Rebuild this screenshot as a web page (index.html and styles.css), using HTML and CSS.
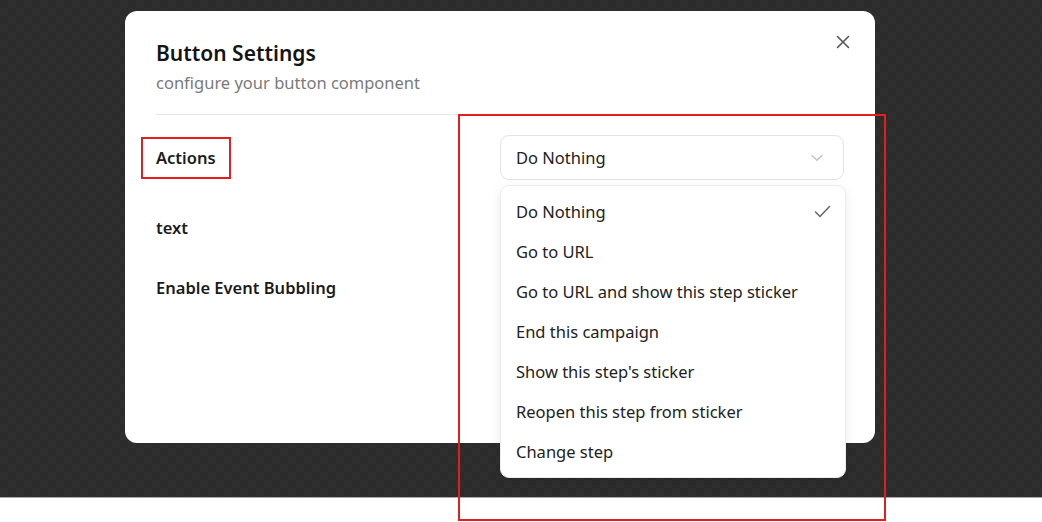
FILE: index.html
```html
<!DOCTYPE html>
<html lang="en">
<head>
<meta charset="utf-8">
<title>Button Settings</title>
<link rel="stylesheet" href="styles.css">
</head>
<body>
<div class="backdrop">
  <div class="modal">
    <div class="header">
      <div class="titles">
        <h1 class="title">Button Settings</h1>
        <p class="subtitle">configure your button component</p>
      </div>
      <button class="close" aria-label="Close">
        <svg width="14" height="14" viewBox="0 0 14 14"><path d="M1.5 1.5 L12.5 12.5 M12.5 1.5 L1.5 12.5" stroke="#555" stroke-width="1.6" fill="none" stroke-linecap="round"/></svg>
      </button>
    </div>
    <div class="divider"></div>
    <div class="form">
      <div class="row row-actions">
        <div class="label"><span class="label-marked">Actions</span></div>
        <div class="control">
          <div class="select">
            <span>Do Nothing</span>
            <svg width="12" height="8" viewBox="0 0 12 8"><path d="M1 1.5 L6 6.3 L11 1.5" stroke="#bdbdbd" stroke-width="1.3" fill="none" stroke-linecap="round" stroke-linejoin="round"/></svg>
          </div>
          <ul class="menu">
            <li class="item selected"><span>Do Nothing</span>
              <svg width="17" height="13" viewBox="0 0 17 13"><path d="M1.5 7 L6 11.5 L15.5 1.5" stroke="#666" stroke-width="1.5" fill="none" stroke-linecap="round" stroke-linejoin="round"/></svg>
            </li>
            <li class="item">Go to URL</li>
            <li class="item">Go to URL and show this step sticker</li>
            <li class="item">End this campaign</li>
            <li class="item">Show this step's sticker</li>
            <li class="item">Reopen this step from sticker</li>
            <li class="item">Change step</li>
          </ul>
        </div>
      </div>
      <div class="row row-text">
        <div class="label">text</div>
      </div>
      <div class="row row-bubbling">
        <div class="label">Enable Event Bubbling</div>
      </div>
    </div>
  </div>
  <div class="annotation"></div>
</div>
</body>
</html>
```
FILE: styles.css
```css
* { box-sizing: border-box; }
html, body { margin: 0; padding: 0; }
body {
  background: #ffffff;
  font-family: "Noto Sans", "Open Sans", sans-serif;
  color: #1b1b1b;
  width: 1042px;
  height: 522px;
  overflow: hidden;
}
.backdrop {
  position: relative;
  height: 498px;
  padding: 11px 0 0 125px;
  background-color: #2b2b2b;
  background-image:
    linear-gradient(45deg, #2f2f2f 25%, transparent 25%, transparent 75%, #2f2f2f 75%),
    linear-gradient(45deg, #2f2f2f 25%, transparent 25%, transparent 75%, #2f2f2f 75%);
  background-size: 16px 16px;
  background-position: 0 0, 8px 8px;
  border-bottom: 1px solid #a9a9a9;
}
.modal {
  width: 750px;
  height: 432px;
  background: #fff;
  border-radius: 12px;
  padding: 28px 31px 0 31px;
}
.header {
  display: flex;
  justify-content: space-between;
  align-items: flex-start;
}
.title {
  margin: 0;
  font-size: 21px;
  line-height: 28px;
  font-weight: 600;
  color: #141414;
}
.subtitle {
  margin: 4px 0 0 0;
  font-size: 16.5px;
  line-height: 24px;
  color: #7a7a7a;
}
.close {
  border: 0;
  background: transparent;
  padding: 0;
  margin: -4px -6px 0 0;
  width: 14px;
  height: 14px;
  display: flex;
  cursor: pointer;
}
.divider {
  height: 1px;
  background: #e6e6e6;
  margin-top: 19px;
}
.form {
  display: flex;
  flex-direction: column;
  padding-top: 20px;
}
.row {
  display: flex;
  align-items: center;
}
.label {
  flex: 1;
  font-size: 16.5px;
  font-weight: 600;
  color: #1b1b1b;
}
.row-actions { height: 45px; }
.row-text { height: 24px; margin-top: 35px; }
.row-bubbling { height: 24px; margin-top: 36px; }
.label-marked {
  display: inline-block;
  margin-left: -15px;
  padding: 0 13px;
  height: 42px;
  line-height: 38px;
  border: 2px solid #e41e1e;
}
.control {
  position: relative;
  width: 344px;
}
.select {
  height: 45px;
  border: 1px solid #e3e3e3;
  border-radius: 9px;
  display: flex;
  align-items: center;
  justify-content: space-between;
  padding: 0 20px 0 15px;
  font-size: 16.5px;
  color: #222;
}
.menu {
  position: absolute;
  top: 50px;
  left: 0;
  width: 346px;
  margin: 0;
  padding: 5px 0 6px 0;
  list-style: none;
  background: #fff;
  border: 1px solid #ececec;
  border-radius: 9px;
  box-shadow: 0 4px 12px rgba(0, 0, 0, 0.08);
  z-index: 2;
}
.item {
  height: 40px;
  display: flex;
  align-items: center;
  justify-content: space-between;
  padding: 0 14px 0 15px;
  font-size: 16.5px;
  color: #222;
}
.annotation {
  position: absolute;
  left: 458px;
  top: 114px;
  width: 428px;
  height: 407px;
  border: 2px solid #e41e1e;
  z-index: 3;
  pointer-events: none;
}
```
